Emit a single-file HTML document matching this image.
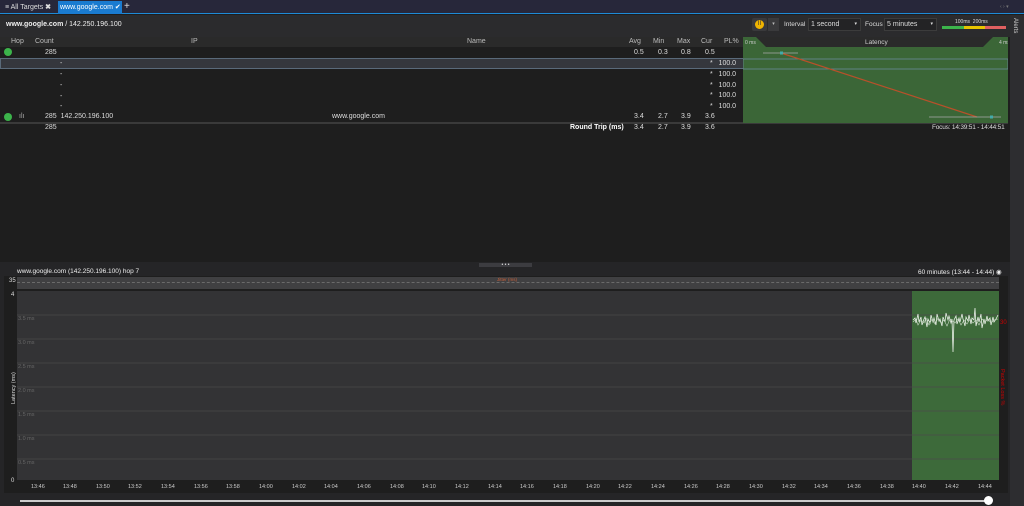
<!DOCTYPE html>
<html><head><meta charset="utf-8"><style>
*{margin:0;padding:0;box-sizing:border-box}
body{width:1024px;height:506px;background:#1e1e1e;font-family:"Liberation Sans",sans-serif;font-size:7px;color:#ddd;position:relative;overflow:hidden}
.a{position:absolute;white-space:nowrap}
</style></head><body>
<div class="a" style="left:0;top:0;width:1024px;height:14px;background:#27273a;border-bottom:1px solid #1e8ad6"></div>
<div class="a" style="left:5px;top:3px;color:#ddd">≡ All Targets <b>✖</b></div>
<div class="a" style="left:58px;top:1px;width:64px;height:13px;background:#1a7bd0;color:#fff;padding:2px 2px">www.google.com ✔</div>
<div class="a" style="left:124px;top:1px;font-size:10px;color:#ddd">+</div>
<div class="a" style="left:1000px;top:4px;color:#777;font-size:5px">‹ › ▾</div>
<div class="a" style="left:0;top:15px;width:1010px;height:22px;background:#2b2b2d"></div>
<div class="a" style="left:6px;top:21px;color:#eee"><b>www.google.com</b> / 142.250.196.100</div>
<div class="a" style="left:752px;top:18px;width:15px;height:13px;background:#3a3a3c;border-radius:2px"></div>
<div class="a" style="left:755px;top:20px;width:9px;height:9px;background:#f0b400;border-radius:50%;font-size:6px;color:#333;text-align:center;line-height:9px">II</div>
<div class="a" style="left:768px;top:18px;width:11px;height:13px;background:#3a3a3c;color:#bbb;font-size:5px;text-align:center;line-height:13px">▾</div>
<div class="a" style="left:784px;top:21px;font-size:6.5px">Interval</div>
<div class="a" style="left:808px;top:18px;width:53px;height:13px;border:1px solid #3c3c3c;background:#232325;padding:2px 2px">1 second<span style="position:absolute;right:3px;font-size:5px">▾</span></div>
<div class="a" style="left:865px;top:21px;font-size:6.5px">Focus</div>
<div class="a" style="left:884px;top:18px;width:53px;height:13px;border:1px solid #3c3c3c;background:#232325;padding:2px 2px">5 minutes<span style="position:absolute;right:3px;font-size:5px">▾</span></div>
<div class="a" style="left:955px;top:19px;font-size:5px">100ms&nbsp;&nbsp;200ms</div>
<div class="a" style="left:942px;top:26px;width:64px;height:3px;background:linear-gradient(90deg,#3cb44b 0 34%,#e8c400 34% 67%,#e06060 67%)"></div>
<div class="a" style="left:1010px;top:15px;width:14px;height:491px;background:#2d2d30"></div>
<div class="a" style="left:1012px;top:18px;font-size:6px;writing-mode:vertical-rl;color:#ccc">Alerts</div>
<div class="a" style="left:0;top:37px;width:743px;height:10px;background:#2a2a2a"></div>
<div class="a" style="left:11px;top:38px;color:#bbb">Hop</div>
<div class="a" style="left:35px;top:38px;color:#bbb">Count</div>
<div class="a" style="left:191px;top:38px;color:#bbb">IP</div>
<div class="a" style="left:467px;top:38px;color:#bbb">Name</div>
<div class="a" style="left:629px;top:38px;color:#bbb">Avg</div>
<div class="a" style="left:653px;top:38px;color:#bbb">Min</div>
<div class="a" style="left:677px;top:38px;color:#bbb">Max</div>
<div class="a" style="left:701px;top:38px;color:#bbb">Cur</div>
<div class="a" style="left:724px;top:38px;color:#bbb">PL%</div>
<div class="a" style="left:0;top:58px;width:1008px;height:11px;background:#35373d;border:1px solid #5a6a7a"></div>
<div class="a" style="left:4px;top:48px;width:8px;height:8px;background:#3cb44b;border-radius:50%"></div>
<div class="a" style="left:4px;top:113px;width:8px;height:8px;background:#3cb44b;border-radius:50%"></div>
<div class="a" style="left:19px;top:113px;color:#aaa">ılı</div>
<div class="a" style="left:45px;top:49px">285</div>
<div class="a" style="left:60px;top:60px">-</div><div class="a" style="left:60px;top:71px">-</div><div class="a" style="left:60px;top:82px">-</div><div class="a" style="left:60px;top:93px">-</div><div class="a" style="left:60px;top:103px">-</div>
<div class="a" style="left:45px;top:113px">285&nbsp;&nbsp;142.250.196.100</div>
<div class="a" style="left:332px;top:113px">www.google.com</div>
<div class="a" style="left:634px;top:49px">0.5</div><div class="a" style="left:658px;top:49px">0.3</div><div class="a" style="left:681px;top:49px">0.8</div><div class="a" style="left:705px;top:49px">0.5</div>
<div class="a" style="left:710px;top:60px">*&nbsp;&nbsp;&nbsp;100.0</div><div class="a" style="left:710px;top:71px">*&nbsp;&nbsp;&nbsp;100.0</div><div class="a" style="left:710px;top:82px">*&nbsp;&nbsp;&nbsp;100.0</div><div class="a" style="left:710px;top:92px">*&nbsp;&nbsp;&nbsp;100.0</div><div class="a" style="left:710px;top:103px">*&nbsp;&nbsp;&nbsp;100.0</div>
<div class="a" style="left:634px;top:113px">3.4</div><div class="a" style="left:658px;top:113px">2.7</div><div class="a" style="left:681px;top:113px">3.9</div><div class="a" style="left:705px;top:113px">3.6</div>
<div class="a" style="left:0;top:122px;width:1008px;height:2px;background:#3a3a3a"></div>
<div class="a" style="left:45px;top:124px">285</div>
<div class="a" style="left:570px;top:124px;color:#fff"><b>Round Trip (ms)</b></div>
<div class="a" style="left:634px;top:124px">3.4</div><div class="a" style="left:658px;top:124px">2.7</div><div class="a" style="left:681px;top:124px">3.9</div><div class="a" style="left:705px;top:124px">3.6</div>
<div class="a" style="left:932px;top:124px;font-size:6.5px;letter-spacing:-0.2px">Focus: 14:39:51 - 14:44:51</div>
<svg class="a" style="left:743px;top:37px" width="265" height="86">
<rect width="265" height="86" fill="#3b6637"/>
<polygon points="13,0 250,0 240,10 23,10" fill="#2a2a2a"/>
<text x="2" y="7" font-size="5" fill="#ccc">0 ms</text><text x="256" y="7" font-size="5" fill="#ccc">4 ms</text>
<text x="122" y="7" font-size="6.5" fill="#ccc">Latency</text>
<rect x="0" y="22" width="265" height="10" fill="none" stroke="#6a8a9a" stroke-width="0.8"/>
<line x1="38" y1="16" x2="234" y2="80" stroke="#b8502a" stroke-width="1.2"/>
<line x1="20" y1="16" x2="55" y2="16" stroke="#aaa" stroke-width="0.7"/>
<line x1="186" y1="80" x2="258" y2="80" stroke="#aaa" stroke-width="0.7"/>
<rect x="37" y="14.5" width="3" height="3" fill="#4aa"/><rect x="247" y="78.5" width="3" height="3" fill="#4aa"/>
</svg>
<div class="a" style="left:0;top:262px;width:1010px;height:244px;background:#252527"></div>
<div class="a" style="left:479px;top:263px;width:53px;height:4px;background:#3c3c40;color:#ddd;font-size:5px;text-align:center;line-height:4px">• • •</div>
<div class="a" style="left:17px;top:268px;color:#eee;font-size:6.5px">www.google.com (142.250.196.100) hop 7</div>
<div class="a" style="left:918px;top:268px;color:#eee;font-size:6.5px">60 minutes (13:44 - 14:44) ◉</div>
<div class="a" style="left:4px;top:276px;width:1004px;height:217px;background:#1e1e1e"></div>
<div class="a" style="left:17px;top:277px;width:982px;height:12px;background:#404042"></div>
<div class="a" style="left:17px;top:282px;width:982px;border-top:1px dashed #6a6a6a"></div>
<div class="a" style="left:497px;top:277px;color:#c8603a;font-size:4.5px">Jitter (ms)</div>
<div class="a" style="left:9px;top:278px;font-size:6px">35</div>
<svg class="a" style="left:0;top:289px" width="1010" height="200">
<rect x="17" y="2" width="982" height="189" fill="#333335"/>
<rect x="912" y="2" width="87" height="189" fill="#3d6a3a"/>
<g stroke="#4a4a4a" stroke-width="0.8">
<line x1="17" y1="26" x2="999" y2="26"/><line x1="17" y1="50" x2="999" y2="50"/><line x1="17" y1="74" x2="999" y2="74"/><line x1="17" y1="98" x2="999" y2="98"/><line x1="17" y1="122" x2="999" y2="122"/><line x1="17" y1="146" x2="999" y2="146"/><line x1="17" y1="170" x2="999" y2="170"/></g>
<g font-size="5.5" fill="#666"><text x="18" y="31">3.5 ms</text><text x="18" y="55">3.0 ms</text><text x="18" y="79">2.5 ms</text><text x="18" y="103">2.0 ms</text><text x="18" y="127">1.5 ms</text><text x="18" y="151">1.0 ms</text><text x="18" y="175">0.5 ms</text></g>
<text x="11" y="7" font-size="6" fill="#ddd">4</text><text x="11" y="193" font-size="6" fill="#ddd">0</text>
<text x="15" y="115" font-size="5.5" fill="#ddd" transform="rotate(-90 15 115)">Latency (ms)</text>
<text x="1000" y="35" font-size="6" fill="#c00">30</text>
<text x="1001" y="80" font-size="5.5" fill="#c00" transform="rotate(90 1001 80)">Packet Loss %</text>
<polyline fill="none" stroke="#e8efe6" stroke-width="0.8" points="913,31 915,29 916,34 918,25 919,33 921,28 922,36 924,30 925,28 927,38 928,30 930,34 931,26 933,33 934,29 936,36 937,25 939,32 940,30 942,37 943,28 945,33 946,24 948,31 949,27 951,34 952,30 953,63 954,31 956,27 957,35 959,29 960,33 962,25 963,30 965,37 966,28 968,32 969,26 971,35 972,29 974,31 975,19 976,37 978,28 979,33 981,25 982,39 984,30 985,35 987,27 988,32 990,29 991,36 993,28 994,33 996,30 998,26"/>
<polyline fill="none" stroke="#c8d8c4" stroke-width="0.6" points="913,33 916,30 918,36 921,31 924,34 926,29 929,36 932,30 935,35 938,29 941,34 944,31 947,37 950,30 955,34 958,30 961,36 964,31 967,35 970,30 973,34 976,31 979,36 982,30 985,33 988,30 991,34 994,31 998,30"/>
</svg>
<div class="a" style="left:0;top:484px;width:1010px;font-size:5.5px;color:#ccc">
<span class="a" style="left:31px">13:46</span><span class="a" style="left:63px">13:48</span><span class="a" style="left:96px">13:50</span><span class="a" style="left:128px">13:52</span><span class="a" style="left:161px">13:54</span><span class="a" style="left:194px">13:56</span><span class="a" style="left:226px">13:58</span><span class="a" style="left:259px">14:00</span><span class="a" style="left:292px">14:02</span><span class="a" style="left:324px">14:04</span><span class="a" style="left:357px">14:06</span><span class="a" style="left:390px">14:08</span><span class="a" style="left:422px">14:10</span><span class="a" style="left:455px">14:12</span><span class="a" style="left:488px">14:14</span><span class="a" style="left:520px">14:16</span><span class="a" style="left:553px">14:18</span><span class="a" style="left:586px">14:20</span><span class="a" style="left:618px">14:22</span><span class="a" style="left:651px">14:24</span><span class="a" style="left:684px">14:26</span><span class="a" style="left:716px">14:28</span><span class="a" style="left:749px">14:30</span><span class="a" style="left:782px">14:32</span><span class="a" style="left:814px">14:34</span><span class="a" style="left:847px">14:36</span><span class="a" style="left:880px">14:38</span><span class="a" style="left:912px">14:40</span><span class="a" style="left:945px">14:42</span><span class="a" style="left:978px">14:44</span></div>
<div class="a" style="left:20px;top:500px;width:970px;height:2px;background:#ccc"></div>
<div class="a" style="left:984px;top:496px;width:9px;height:9px;background:#fff;border-radius:50%"></div>
</body></html>
